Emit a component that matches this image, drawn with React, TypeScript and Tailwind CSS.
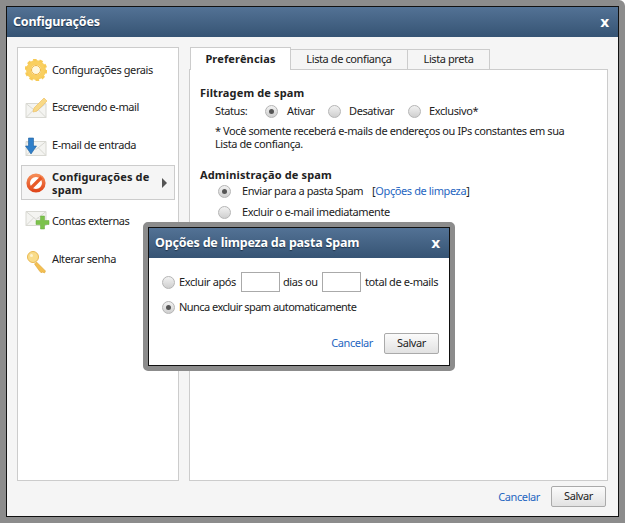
const Radio = ({ checked = false }: { checked?: boolean }) => (
  <span className="flex h-[13px] w-[13px] shrink-0 items-center justify-center rounded-full border border-[#b5b5b5] bg-gradient-to-b from-[#f2f2f2] to-[#cfcfcf]">
    {checked && <span className="h-[5px] w-[5px] rounded-full bg-[#555]" />}
  </span>
);

const Envelope = () => (
  <>
    <path d="M1 6.500h20v14H1z" fill="#f4f4f1" stroke="#d8d8d2" />
    <path d="M1 6.500l10 8 10-8M1 20.500l8-8M21 20.500l-8-8" fill="none" stroke="#d8d8d2" />
  </>
);

const GearIcon = () => (
  <svg width="22" height="22" viewBox="0 0 22 22">
    <circle cx="11" cy="11" r="7.500" fill="none" stroke="#f9cf60" strokeWidth="5" />
    <circle cx="11" cy="11" r="10" fill="none" stroke="#f7ca55" strokeWidth="2.500" strokeDasharray="3.500 2.780" />
    <circle cx="11" cy="11" r="4.500" fill="#fff8e0" stroke="#eeb440" />
  </svg>
);

const PencilIcon = () => (
  <svg width="23" height="22" viewBox="0 0 23 22">
    <Envelope />
    <path d="M8 15l1-4L19 1l3 3L12 14z" fill="#f8d987" stroke="#efc264" strokeWidth="0.700" />
  </svg>
);

const InboxIcon = () => (
  <svg width="23" height="22" viewBox="0 0 23 22">
    <Envelope />
    <path d="M3.500 3h5v8h3L6 19 .5 11h3z" fill="#2f7fc9" stroke="#1f5f9e" strokeWidth="0.600" />
  </svg>
);

const BlockIcon = () => (
  <svg width="22" height="22" viewBox="0 0 22 22">
    <defs>
      <linearGradient id="blockFill" x1="0" y1="0" x2="0" y2="1">
        <stop offset="0" stopColor="#f58a55" />
        <stop offset="1" stopColor="#e0481c" />
      </linearGradient>
    </defs>
    <circle cx="11" cy="11" r="7.800" fill="#fff" stroke="url(#blockFill)" strokeWidth="3.600" />
    <path d="M5.500 16.500l11-11" stroke="#e85a28" strokeWidth="3.200" />
  </svg>
);

const PlusIcon = () => (
  <svg width="25" height="22" viewBox="0 0 25 22">
    <g transform="translate(0 -5)">
      <Envelope />
    </g>
    <path d="M11 10.500h4.500V6h4v4.500H24v4h-4.500V19h-4v-4.500H11z" fill="#7cc24c" stroke="#66a93a" strokeWidth="0.500" />
  </svg>
);

const KeyIcon = () => (
  <svg width="22" height="24" viewBox="0 0 22 24" className="overflow-visible">
    <g transform="translate(1.500 4)">
      <path d="M10 11l9 9-1 2-2-1-1 1-2-2-5-7z" fill="#f3bf52" stroke="#dda534" strokeWidth="0.600" />
      <circle cx="6.500" cy="6" r="5.500" fill="#f9dc8a" stroke="#e9b851" />
      <circle cx="5" cy="4.500" r="1.500" fill="#fdf3cf" />
    </g>
  </svg>
);

const MenuItem = ({ icon, label, h }: { icon: React.ReactNode; label: string; h: string }) => (
  <div className={`flex items-center pl-[7px] ${h}`}>
    <span className="flex w-[27px] shrink-0 items-center">{icon}</span>
    <span>{label}</span>
  </div>
);

const Button = () => (
  <button className="h-[21px] w-[55px] rounded-[2px] border border-[#aaa] bg-gradient-to-b from-[#fbfbfb] to-[#e2e2e2] text-[#222]">
    Salvar
  </button>
);

const Header = ({ title, className }: { title: string; className: string }) => (
  <div className={`flex items-center justify-between bg-gradient-to-b from-[#537295] to-[#365474] font-bold tracking-[-0.2px] text-white ${className}`}>
    <span className="[text-shadow:0_1px_1px_#1d3147]">{title}</span>
    <span className="font-['DejaVu_Sans',sans-serif] text-[14px] leading-none">x</span>
  </div>
);

export default function App() {
  return (
    <div className="relative h-[524px] w-[626px] overflow-hidden bg-white pr-px font-['Noto_Sans',sans-serif] text-[11px] tracking-[-0.4px] text-[#222]">
      <div className="h-[523px] rounded-tr-[6px] border-[6px] border-[#8c8c8c]">
        <div className="flex h-full flex-col border border-[#111] bg-[#f5f5f5]">
          <Header title="Configurações" className="h-[30px] shrink-0 pl-[6px] pr-[9px] text-[12.500px]" />
          <div className="flex gap-[10px] px-[10px] pt-[10px]">
            <div className="h-[434px] w-[162px] shrink-0 border border-[#ccc] bg-white pt-[3px]">
              <MenuItem icon={<GearIcon />} label="Configurações gerais" h="h-[38px]" />
              <MenuItem icon={<PencilIcon />} label="Escrevendo e-mail" h="h-[37px]" />
              <MenuItem icon={<InboxIcon />} label="E-mail de entrada" h="h-[39px]" />
              <div className="mx-[3px] flex h-[35px] items-center border border-[#ccc] bg-[#f5f5f5] pl-[3px] font-bold leading-[13px] tracking-[0.15px]">
                <span className="w-[27px] shrink-0"><BlockIcon /></span>
                <span className="w-[104px]">Configurações de spam</span>
                <span className="ml-[6px] h-0 w-0 border-y-[5px] border-l-[5px] border-y-transparent border-l-[#555]" />
              </div>
              <div className="h-[2px]" />
              <MenuItem icon={<PlusIcon />} label="Contas externas" h="h-[38px]" />
              <MenuItem icon={<KeyIcon />} label="Alterar senha" h="h-[38px]" />
            </div>
            <div className="flex w-[420px] flex-col">
              <div className="flex h-[22px] items-end pl-px">
                <div className="relative z-10 -mb-px flex h-[23px] w-[101px] items-center justify-center border border-b-0 border-[#ccc] bg-white font-bold tracking-[0.15px]">Preferências</div>
                <div className="flex h-[20px] w-[117px] items-center justify-center border-r border-t border-[#ccc]">Lista de confiança</div>
                <div className="flex h-[20px] w-[82px] items-center justify-center border-r border-t border-[#ccc]">Lista preta</div>
              </div>
              <div className="h-[412px] border border-[#ccc] bg-white pl-[10px] pt-[16px]">
                <div className="font-bold leading-[14px] tracking-[0.15px]">Filtragem de spam</div>
                <div className="mt-[4px] flex h-[14px] items-center pl-[15px]">
                  <span className="w-[50px]">Status:</span>
                  <Radio checked />
                  <span className="ml-[9px] w-[41px]">Ativar</span>
                  <Radio />
                  <span className="ml-[8px] w-[59px]">Desativar</span>
                  <Radio />
                  <span className="ml-[8px]">Exclusivo*</span>
                </div>
                <p className="mt-[6px] w-[370px] pl-[15px] leading-[13px]">* Você somente receberá e-mails de endereços ou IPs constantes em sua Lista de confiança.</p>
                <div className="mt-[18px] font-bold leading-[14px] tracking-[0.15px]">Administração de spam</div>
                <div className="mt-[2px] flex h-[14px] items-center pl-[18px]">
                  <Radio checked />
                  <span className="ml-[11px]">Enviar para a pasta Spam</span>
                  <span className="ml-[9px]">[<span className="text-[#1f66c1]">Opções de limpeza</span>]</span>
                </div>
                <div className="mt-[7px] flex h-[14px] items-center pl-[18px]">
                  <Radio />
                  <span className="ml-[11px]">Excluir o e-mail imediatamente</span>
                </div>
              </div>
            </div>
          </div>
          <div className="flex items-center justify-end gap-[11px] pr-[12px] pt-[5px]">
            <span className="pt-px text-[#1f66c1]">Cancelar</span>
            <Button />
          </div>
        </div>
      </div>

      <div className="absolute left-[143px] top-[222px] h-[149px] w-[312px] rounded-[5px] border-[5px] border-[#8c8c8c]">
        <div className="h-full border border-[#111] bg-white">
          <Header title="Opções de limpeza da pasta Spam" className="h-[30px] pl-[6px] pr-[9px] text-[12.500px]" />
          <div className="mt-[14px] flex h-[20px] items-center whitespace-nowrap pl-[13px]">
            <Radio />
            <span className="ml-[4px] w-[62px]">Excluir após</span>
            <span className="h-[20px] w-[39px] border border-[#aaa]" />
            <span className="ml-[3px] w-[39px]">dias ou</span>
            <span className="h-[20px] w-[39px] border border-[#aaa]" />
            <span className="ml-[4px]">total de e-mails</span>
          </div>
          <div className="mt-[8px] flex h-[14px] items-center pl-[13px]">
            <Radio checked />
            <span className="ml-[4px] tracking-[-0.55px]">Nunca excluir spam automaticamente</span>
          </div>
          <div className="mt-[19px] flex items-center justify-end gap-[11px] pr-[10px]">
            <span className="text-[#1f66c1]">Cancelar</span>
            <Button />
          </div>
        </div>
      </div>
    </div>
  );
}
